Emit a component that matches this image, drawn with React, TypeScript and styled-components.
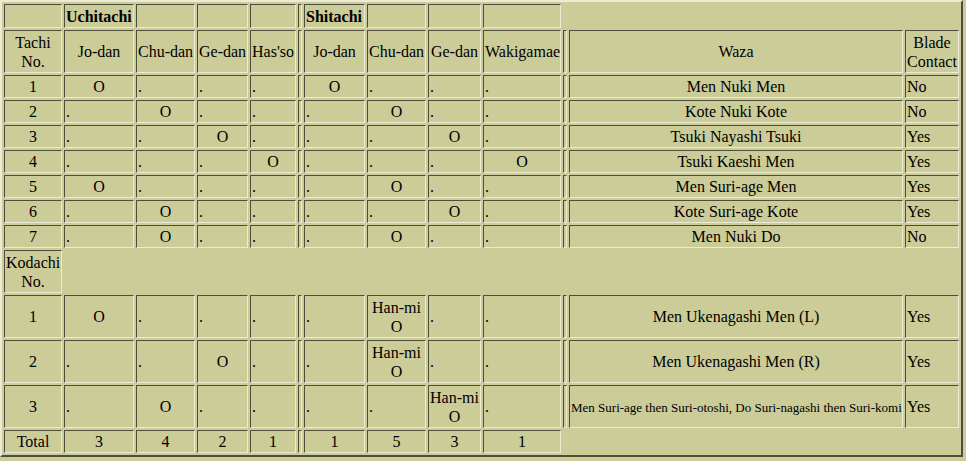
import React from 'react'
import styled, { createGlobalStyle } from 'styled-components'

const BG = '#cccc99'
const DARK = '#4e4e3e'
const LIGHT = '#ececd6'

type Mark = 'O' | '.' | 'H'

type Kata = {
  no: number
  uchi: Mark[]
  shi: Mark[]
  waza: string
  contact: string
  small?: boolean
}

const COLS = [58, 70, 59, 51, 46, 4, 61, 59, 53, 78, 4, 334, 54]

const tachi: Kata[] = [
  { no: 1, uchi: ['O', '.', '.', '.'], shi: ['O', '.', '.', '.'], waza: 'Men Nuki Men', contact: 'No' },
  { no: 2, uchi: ['.', 'O', '.', '.'], shi: ['.', 'O', '.', '.'], waza: 'Kote Nuki Kote', contact: 'No' },
  { no: 3, uchi: ['.', '.', 'O', '.'], shi: ['.', '.', 'O', '.'], waza: 'Tsuki Nayashi Tsuki', contact: 'Yes' },
  { no: 4, uchi: ['.', '.', '.', 'O'], shi: ['.', '.', '.', 'O'], waza: 'Tsuki Kaeshi Men', contact: 'Yes' },
  { no: 5, uchi: ['O', '.', '.', '.'], shi: ['.', 'O', '.', '.'], waza: 'Men Suri-age Men', contact: 'Yes' },
  { no: 6, uchi: ['.', 'O', '.', '.'], shi: ['.', '.', 'O', '.'], waza: 'Kote Suri-age Kote', contact: 'Yes' },
  { no: 7, uchi: ['.', 'O', '.', '.'], shi: ['.', 'O', '.', '.'], waza: 'Men Nuki Do', contact: 'No' },
]

const kodachi: Kata[] = [
  { no: 1, uchi: ['O', '.', '.', '.'], shi: ['.', 'H', '.', '.'], waza: 'Men Ukenagashi Men (L)', contact: 'Yes' },
  { no: 2, uchi: ['.', '.', 'O', '.'], shi: ['.', 'H', '.', '.'], waza: 'Men Ukenagashi Men (R)', contact: 'Yes' },
  {
    no: 3,
    uchi: ['.', 'O', '.', '.'],
    shi: ['.', '.', 'H', '.'],
    waza: 'Men Suri-age then Suri-otoshi, Do Suri-nagashi then Suri-komi',
    contact: 'Yes',
    small: true,
  },
]

const GlobalStyle = createGlobalStyle`
  body {
    margin: 0;
    background: ${BG};
    color: #000;
    font-family: "Liberation Serif", "Times New Roman", serif;
    font-size: 16px;
  }
`

const Grid = styled.table`
  width: 963px;
  table-layout: fixed;
  border-collapse: separate;
  border-spacing: 2px;
  empty-cells: show;
  border: 2px solid;
  border-color: ${LIGHT} ${DARK} ${DARK} ${LIGHT};
  line-height: 19px;
`

const Col = styled.col<{ $w: number }>`
  width: ${(p) => p.$w}px;
`

const Row = styled.tr<{ $h: number }>`
  height: ${(p) => p.$h}px;
`

const Cell = styled.td<{ $center?: boolean }>`
  padding: 1px;
  border: 1px solid;
  border-color: ${DARK} ${LIGHT} ${LIGHT} ${DARK};
  text-align: ${(p) => (p.$center ? 'center' : 'left')};
  vertical-align: middle;
  white-space: nowrap;
`

const Spacer = styled(Cell)`
  padding: 0;
`

const GroupTitle = styled(Cell)`
  font-weight: bold;
`

const Fine = styled.span`
  font-size: 13px;
`

const MarkCell: React.FC<{ m: Mark }> = ({ m }) => {
  if (m === '.') return <Cell>.</Cell>
  if (m === 'O') return <Cell $center>O</Cell>
  return (
    <Cell $center>
      Han-mi
      <br />O
    </Cell>
  )
}

const KataRow: React.FC<{ kata: Kata; h: number }> = ({ kata, h }) => (
  <Row $h={h}>
    <Cell $center>{kata.no}</Cell>
    {kata.uchi.map((m, i) => (
      <MarkCell key={`u${i}`} m={m} />
    ))}
    <Spacer />
    {kata.shi.map((m, i) => (
      <MarkCell key={`s${i}`} m={m} />
    ))}
    <Spacer />
    <Cell $center>{kata.small ? <Fine>{kata.waza}</Fine> : kata.waza}</Cell>
    <Cell>{kata.contact}</Cell>
  </Row>
)

export default function App() {
  return (
    <>
      <GlobalStyle />
      <Grid>
        <colgroup>
          {COLS.map((w, i) => (
            <Col key={i} $w={w} />
          ))}
        </colgroup>
        <tbody>
          <Row $h={24}>
            <Cell>&nbsp;</Cell>
            <GroupTitle>Uchitachi</GroupTitle>
            <Cell>&nbsp;</Cell>
            <Cell>&nbsp;</Cell>
            <Cell>&nbsp;</Cell>
            <Spacer />
            <GroupTitle>Shitachi</GroupTitle>
            <Cell>&nbsp;</Cell>
            <Cell>&nbsp;</Cell>
            <Cell>&nbsp;</Cell>
          </Row>
          <Row $h={43}>
            <Cell $center>
              Tachi
              <br />
              No.
            </Cell>
            <Cell $center>Jo-dan</Cell>
            <Cell $center>Chu-dan</Cell>
            <Cell $center>Ge-dan</Cell>
            <Cell $center>Has'so</Cell>
            <Spacer />
            <Cell $center>Jo-dan</Cell>
            <Cell $center>Chu-dan</Cell>
            <Cell $center>Ge-dan</Cell>
            <Cell $center>Wakigamae</Cell>
            <Spacer />
            <Cell $center>Waza</Cell>
            <Cell $center>
              Blade
              <br />
              Contact
            </Cell>
          </Row>
          {tachi.map((k) => (
            <KataRow key={`t${k.no}`} kata={k} h={23} />
          ))}
          <Row $h={43}>
            <Cell $center>
              Kodachi
              <br />
              No.
            </Cell>
          </Row>
          {kodachi.map((k) => (
            <KataRow key={`k${k.no}`} kata={k} h={43} />
          ))}
          <Row $h={23}>
            <Cell $center>Total</Cell>
            <Cell $center>3</Cell>
            <Cell $center>4</Cell>
            <Cell $center>2</Cell>
            <Cell $center>1</Cell>
            <Spacer />
            <Cell $center>1</Cell>
            <Cell $center>5</Cell>
            <Cell $center>3</Cell>
            <Cell $center>1</Cell>
          </Row>
        </tbody>
      </Grid>
    </>
  )
}
